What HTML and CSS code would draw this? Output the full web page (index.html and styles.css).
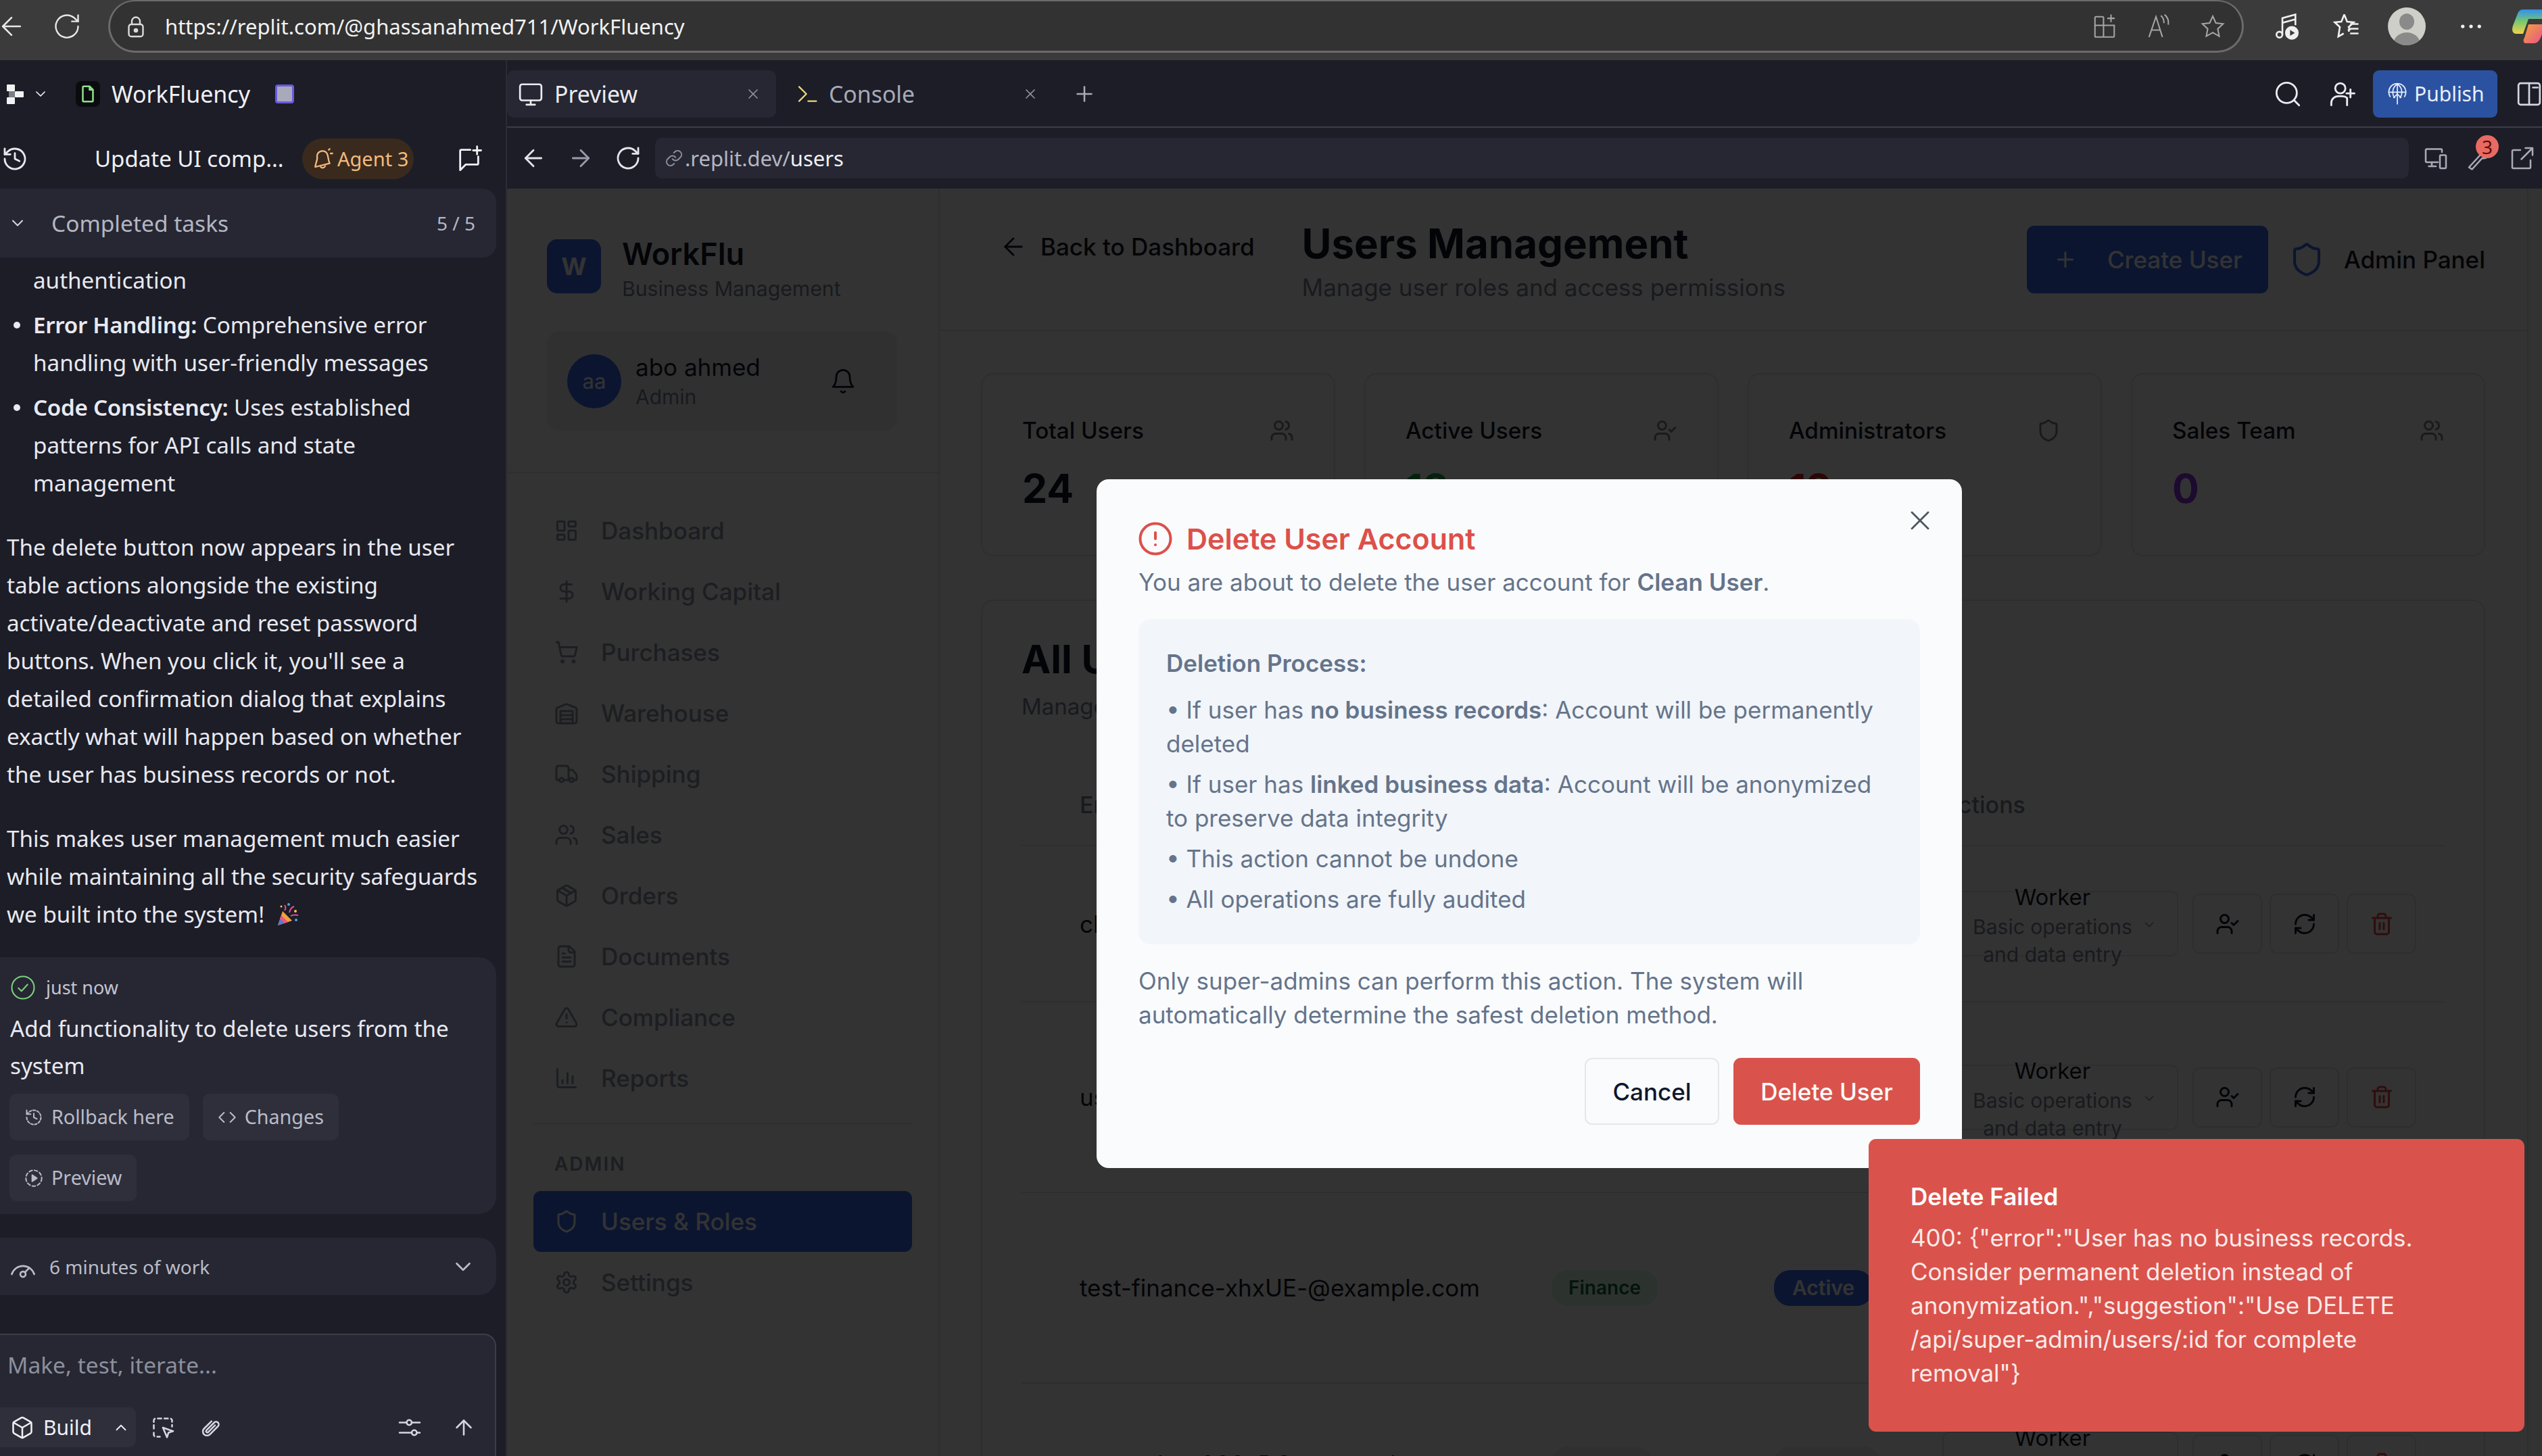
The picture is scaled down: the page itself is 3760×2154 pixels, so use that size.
FILE: index.html
```html
<!DOCTYPE html>
<html>
<head>
  <title>WorkFluency - Replit</title>
  <link rel="stylesheet" href="styles.css">
</head>
<body>
  <svg class="sprite" width="0" height="0">
    <symbol id="i-users" viewBox="0 0 24 24"><path d="M16 21v-2a4 4 0 0 0-4-4H6a4 4 0 0 0-4 4v2"/><circle cx="9" cy="7" r="4"/><path d="M22 21v-2a4 4 0 0 0-3-3.87"/><path d="M16 3.13a4 4 0 0 1 0 7.75"/></symbol>
    <symbol id="i-user-check" viewBox="0 0 24 24"><path d="M16 21v-2a4 4 0 0 0-4-4H6a4 4 0 0 0-4 4v2"/><circle cx="9" cy="7" r="4"/><polyline points="16 11 18 13 22 9"/></symbol>
    <symbol id="i-shield" viewBox="0 0 24 24"><path d="M20 13c0 5-3.500 7.500-7.660 8.950a1 1 0 0 1-.67-.01C7.500 20.500 4 18 4 13V6a1 1 0 0 1 1-1c2 0 4.500-1.200 6.240-2.720a1.170 1.170 0 0 1 1.520 0C14.510 3.810 17 5 19 5a1 1 0 0 1 1 1z"/></symbol>
    <symbol id="i-dash" viewBox="0 0 24 24"><rect x="3" y="3" width="7" height="9" rx="1"/><rect x="14" y="3" width="7" height="5" rx="1"/><rect x="14" y="12" width="7" height="9" rx="1"/><rect x="3" y="16" width="7" height="5" rx="1"/></symbol>
    <symbol id="i-dollar" viewBox="0 0 24 24"><path d="M12 2v20"/><path d="M17 5H9.500a3.500 3.500 0 0 0 0 7h5a3.500 3.500 0 0 1 0 7H6"/></symbol>
    <symbol id="i-cart" viewBox="0 0 24 24"><circle cx="8" cy="21" r="1"/><circle cx="19" cy="21" r="1"/><path d="M2.050 2.050h2l2.660 12.420a2 2 0 0 0 2 1.580h9.780a2 2 0 0 0 1.950-1.570l1.650-7.430H5.120"/></symbol>
    <symbol id="i-warehouse" viewBox="0 0 24 24"><path d="M22 8.350V20a2 2 0 0 1-2 2H4a2 2 0 0 1-2-2V8.350A2 2 0 0 1 3.260 6.500l8-3.200a2 2 0 0 1 1.480 0l8 3.200A2 2 0 0 1 22 8.350Z"/><path d="M6 18h12"/><path d="M6 14h12"/><rect x="6" y="10" width="12" height="12"/></symbol>
    <symbol id="i-truck" viewBox="0 0 24 24"><path d="M14 18V6a2 2 0 0 0-2-2H4a2 2 0 0 0-2 2v11a1 1 0 0 0 1 1h2"/><path d="M15 18H9"/><path d="M19 18h2a1 1 0 0 0 1-1v-3.650a1 1 0 0 0-.22-.624l-3.480-4.350A1 1 0 0 0 17.520 8H14"/><circle cx="17" cy="18" r="2"/><circle cx="7" cy="18" r="2"/></symbol>
    <symbol id="i-package" viewBox="0 0 24 24"><path d="M11 21.730a2 2 0 0 0 2 0l7-4A2 2 0 0 0 21 16V8a2 2 0 0 0-1-1.730l-7-4a2 2 0 0 0-2 0l-7 4A2 2 0 0 0 3 8v8a2 2 0 0 0 1 1.730z"/><path d="M12 22V12"/><path d="m3.300 7 8.700 5 8.700-5"/><path d="m7.500 4.270 9 5.150"/></symbol>
    <symbol id="i-file" viewBox="0 0 24 24"><path d="M15 2H6a2 2 0 0 0-2 2v16a2 2 0 0 0 2 2h12a2 2 0 0 0 2-2V7Z"/><path d="M14 2v4a2 2 0 0 0 2 2h4"/><path d="M10 9H8"/><path d="M16 13H8"/><path d="M16 17H8"/></symbol>
    <symbol id="i-alert" viewBox="0 0 24 24"><path d="m21.730 18-8-14a2 2 0 0 0-3.480 0l-8 14A2 2 0 0 0 4 21h16a2 2 0 0 0 1.730-3"/><path d="M12 9v4"/><path d="M12 17h.01"/></symbol>
    <symbol id="i-chart" viewBox="0 0 24 24"><path d="M3 3v16a2 2 0 0 0 2 2h16"/><path d="M18 17V10"/><path d="M13 17V7"/><path d="M8 17v-3"/></symbol>
    <symbol id="i-gear" viewBox="0 0 24 24"><path d="M12.220 2h-.44a2 2 0 0 0-2 2v.18a2 2 0 0 1-1 1.730l-.43.25a2 2 0 0 1-2 0l-.15-.08a2 2 0 0 0-2.730.73l-.22.38a2 2 0 0 0 .73 2.730l.15.1a2 2 0 0 1 1 1.720v.51a2 2 0 0 1-1 1.740l-.15.09a2 2 0 0 0-.73 2.730l.22.38a2 2 0 0 0 2.730.73l.15-.08a2 2 0 0 1 2 0l.43.25a2 2 0 0 1 1 1.730V20a2 2 0 0 0 2 2h.44a2 2 0 0 0 2-2v-.18a2 2 0 0 1 1-1.730l.43-.25a2 2 0 0 1 2 0l.15.08a2 2 0 0 0 2.730-.73l.22-.39a2 2 0 0 0-.73-2.730l-.15-.08a2 2 0 0 1-1-1.740v-.5a2 2 0 0 1 1-1.740l.15-.09a2 2 0 0 0 .73-2.730l-.22-.38a2 2 0 0 0-2.730-.73l-.15.08a2 2 0 0 1-2 0l-.43-.25a2 2 0 0 1-1-1.730V4a2 2 0 0 0-2-2z"/><circle cx="12" cy="12" r="3"/></symbol>
    <symbol id="i-bell" viewBox="0 0 24 24"><path d="M6 8a6 6 0 0 1 12 0c0 7 3 9 3 9H3s3-2 3-9"/><path d="M10.300 21a1.940 1.940 0 0 0 3.400 0"/></symbol>
    <symbol id="i-left" viewBox="0 0 24 24"><path d="m12 19-7-7 7-7"/><path d="M19 12H5"/></symbol>
    <symbol id="i-right" viewBox="0 0 24 24"><path d="m12 5 7 7-7 7"/><path d="M5 12h14"/></symbol>
    <symbol id="i-up" viewBox="0 0 24 24"><path d="m5 12 7-7 7 7"/><path d="M12 19V5"/></symbol>
    <symbol id="i-plus" viewBox="0 0 24 24"><path d="M5 12h14"/><path d="M12 5v14"/></symbol>
    <symbol id="i-x" viewBox="0 0 24 24"><path d="M18 6 6 18"/><path d="m6 6 12 12"/></symbol>
    <symbol id="i-refresh" viewBox="0 0 24 24"><path d="M3 12a9 9 0 0 1 9-9 9.750 9.750 0 0 1 6.740 2.740L21 8"/><path d="M21 3v5h-5"/><path d="M21 12a9 9 0 0 1-9 9 9.750 9.750 0 0 1-6.740-2.740L3 16"/><path d="M8 16H3v5"/></symbol>
    <symbol id="i-reload" viewBox="0 0 24 24"><path d="M21 12a9 9 0 1 1-3-6.700L21 8"/><path d="M21 3v5h-5"/></symbol>
    <symbol id="i-trash" viewBox="0 0 24 24"><path d="M3 6h18"/><path d="M19 6v14c0 1-1 2-2 2H7c-1 0-2-1-2-2V6"/><path d="M8 6V4c0-1 1-2 2-2h4c1 0 2 1 2 2v2"/><path d="M10 11v6"/><path d="M14 11v6"/></symbol>
    <symbol id="i-down" viewBox="0 0 24 24"><path d="m6 9 6 6 6-6"/></symbol>
  </svg>

  <div class="browser-bar">
    <svg class="ic back-cut" viewBox="0 0 24 24"><use href="#i-left"/></svg>
    <svg class="ic bb-reload" viewBox="0 0 24 24"><use href="#i-reload"/></svg>
    <div class="url-pill">
      <svg class="url-lock" viewBox="0 0 24 24" fill="none" stroke="currentColor" stroke-width="1.600"><rect x="5" y="10" width="14" height="12" rx="2.500"/><path d="M8 10V7a4 4 0 0 1 8 0v3"/><circle cx="12" cy="16" r="1.400" fill="currentColor"/></svg>
      <span class="url-text">https://replit.com/@ghassanahmed711/WorkFluency</span>
      <div class="url-icons">
        <svg viewBox="0 0 24 24" fill="none" stroke="currentColor" stroke-width="1.300"><path d="M3 11h18v10a1 1 0 0 1-1 1H4a1 1 0 0 1-1-1zM3 11V4a1 1 0 0 1 1-1h6a1 1 0 0 1 1 1v18M11 11h10"/><path d="M18 1v7M14.500 4.500h7"/></svg>
        <svg viewBox="0 0 24 24" fill="none" stroke="currentColor" stroke-width="1.300"><path d="M3 22 9.500 3l6 19M5.500 15.500h8"/><path d="M14 2c2 1.500 3 4 3 7M17.500 1c2.500 2 4 5.500 3.500 9.500"/></svg>
        <svg viewBox="0 0 24 24" fill="none" stroke="currentColor" stroke-width="1.300"><path d="m12 2.500 2.900 6.300 6.800.8-5 4.700 1.300 6.900-6-3.400-6 3.400 1.300-6.900-5-4.700 6.800-.8z"/></svg>
      </div>
    </div>
    <div class="bb-tools">
      <svg class="bb-tool" viewBox="0 0 24 24" fill="none" stroke="currentColor" stroke-width="1.500"><path d="M8 19V5l11-3v9"/><path d="M8 9l11-3"/><circle cx="5.500" cy="19" r="2.500"/><circle cx="16" cy="17.500" r="5" fill="currentColor"/><path d="m14.500 15 4 2.500-4 2.500z" fill="#3b3b3b" stroke="none"/></svg>
      <svg class="bb-tool" viewBox="0 0 24 24" fill="none" stroke="currentColor" stroke-width="1.500"><path d="m10 2 2.400 6 5.600.6-4.300 4 1 2-1 .4.400 1.500M10 2 7.600 8l-5.600.6 4.300 4-1.300 8 4.500-2.600"/><path d="M15 10h7M15 14h7M15 18h7"/></svg>
      <div class="bb-avatar"><span class="bb-avatar-head"></span><span class="bb-avatar-body"></span></div>
      <svg class="bb-tool bb-dots" viewBox="0 0 24 24" fill="currentColor"><circle cx="5" cy="12" r="1.500"/><circle cx="12" cy="12" r="1.500"/><circle cx="19" cy="12" r="1.500"/></svg>
      <svg class="bb-copilot" viewBox="0 0 44 50">
        <defs>
          <linearGradient id="cp-a" x1="0" y1="0" x2="0" y2="1"><stop offset="0" stop-color="#2f8ff0"/><stop offset=".5" stop-color="#7bc86c"/><stop offset="1" stop-color="#f2d24a"/></linearGradient>
          <linearGradient id="cp-b" x1="0" y1="0" x2="1" y2="1"><stop offset="0" stop-color="#f2a43a"/><stop offset="1" stop-color="#e8558a"/></linearGradient>
        </defs>
        <path d="M16 0h28v14H24L16 36H6C0 36-1 30 1 24L8 6c2-4 4-6 8-6z" fill="url(#cp-a)"/>
        <path d="M24 22h20v14c-2 8-6 14-12 14H20c-4 0-4-6-2-8l6-20z" fill="url(#cp-b)"/>
      </svg>
    </div>
  </div>

  <div class="app">
    <aside class="agent">
      <div class="project-row">
        <svg class="replit-logo" viewBox="0 0 25 29" fill="#f2f2f4"><rect width="12" height="10" rx="1"/><rect x="12" y="10" width="13" height="9" rx="1"/><rect x="3" y="10" width="9" height="9" opacity=".45"/><rect y="19" width="12" height="10" rx="1"/></svg>
        <svg class="ic small-chev" viewBox="0 0 24 24"><use href="#i-down"/></svg>
        <span class="project-badge"><svg viewBox="0 0 24 24" fill="none" stroke="#8fe388" stroke-width="2"><path d="M14 3H7a1 1 0 0 0-1 1v16a1 1 0 0 0 1 1h10a1 1 0 0 0 1-1V7z"/><path d="M14 3v4h4"/></svg></span>
        <span class="project-name">WorkFluency</span>
        <span class="project-stop"></span>
      </div>
      <div class="chat-row">
        <svg class="ic chat-history" viewBox="0 0 24 24"><path d="M3 12a9 9 0 1 0 3-6.700L3 8"/><path d="M3 3v5h5"/><path d="M12 7v5l4 2"/></svg>
        <span class="chat-title">Update UI comp...</span>
        <span class="agent-badge">
          <svg class="ic" viewBox="0 0 24 24"><path d="M6 9a6 6 0 0 1 11-3c2 4 1 8 3 11L4 21c0-4 3-7 2-12z"/><path d="M10 21a3 3 0 0 0 5-1"/><path d="M19 2l1-1M21 6h2"/></svg>
          Agent 3
        </span>
        <svg class="ic chat-new" viewBox="0 0 24 24"><path d="M13 4H5a1 1 0 0 0-1 1v17l5-5h10a1 1 0 0 0 1-1v-6"/><path d="M19 1v7M15.500 4.500h7"/></svg>
      </div>
      <div class="tasks-bar">
        <svg class="ic" viewBox="0 0 24 24"><use href="#i-down"/></svg>
        <span class="tasks-label">Completed tasks</span>
        <span class="tasks-count">5 / 5</span>
      </div>
      <div class="chat-log">
        <ul class="chat-list">
          <li class="no-dot">authentication</li>
          <li><b>Error Handling:</b> Comprehensive error handling with user-friendly messages</li>
          <li><b>Code Consistency:</b> Uses established patterns for API calls and state management</li>
        </ul>
        <p class="chat-para">The delete button now appears in the user table actions alongside the existing activate/deactivate and reset password buttons. When you click it, you'll see a detailed confirmation dialog that explains exactly what will happen based on whether the user has business records or not.</p>
        <p class="chat-para">This makes user management much easier while maintaining all the security safeguards we built into the system!
          <svg class="party" viewBox="0 0 34 36"><path d="M3 34 10 13l14 14z" fill="#f0a33a"/><path d="M3 34l3.500-10 6.500 6.500z" fill="#5a7ac8"/><path d="M8 19l10 10-5 2L6 24z" fill="#e8558a"/><path d="M13 12c2-3 2-5 0-8M20 15c1-5 4-8 7-9M22 20c4-2 7-2 11-1" fill="none" stroke="#e84aa0" stroke-width="2"/><circle cx="19" cy="3" r="2" fill="#4aa3e8"/><circle cx="29" cy="13" r="2" fill="#f2c84a"/><circle cx="30" cy="26" r="2" fill="#4aa3e8"/><circle cx="8" cy="6" r="1.500" fill="#f2c84a"/></svg>
        </p>
        <div class="msg-card">
          <div class="msg-time">
            <svg class="msg-check" viewBox="0 0 24 24"><circle cx="12" cy="12" r="11"/><path d="m7.500 12.500 3 3 6-6.500"/></svg>
            just now
          </div>
          <div class="msg-text">Add functionality to delete users from the system</div>
          <div class="msg-actions">
            <span class="msg-btn"><svg class="ic" viewBox="0 0 24 24"><path d="M3 12a9 9 0 1 0 3-6.700L3 8" stroke-dasharray="3 2"/><path d="M3 3v5h5"/><path d="M12 7v5l4 2"/></svg>Rollback here</span>
            <span class="msg-btn"><svg class="ic" viewBox="0 0 24 24"><path d="m8 6-6 6 6 6"/><path d="m16 6 6 6-6 6"/></svg>Changes</span>
            <span class="msg-btn"><svg class="ic" viewBox="0 0 24 24"><circle cx="12" cy="12" r="10" stroke-dasharray="4 2.800"/><path d="m10 8 6 4-6 4z" fill="currentColor"/></svg>Preview</span>
          </div>
        </div>
        <div class="work-card">
          <svg class="ic" viewBox="0 0 24 24"><path d="M1.500 19a11 11 0 0 1 21 0"/><circle cx="12" cy="19" r="2.500"/><path d="m14 17 4-4"/></svg>
          <span>6 minutes of work</span>
          <svg class="ic work-chev" viewBox="0 0 24 24"><use href="#i-down"/></svg>
        </div>
      </div>
      <div class="composer">
        <div class="composer-input">Make, test, iterate...</div>
        <div class="composer-tools">
          <span class="build-chip">
            <svg class="ic" viewBox="0 0 24 24"><path d="M11 21.730a2 2 0 0 0 2 0l7-4A2 2 0 0 0 21 16V8a2 2 0 0 0-1-1.730l-7-4a2 2 0 0 0-2 0l-7 4A2 2 0 0 0 3 8v8a2 2 0 0 0 1 1.730z"/><path d="M12 22V12"/><path d="m3.300 7 8.700 5 8.700-5"/></svg>
            Build
            <svg class="ic build-caret" viewBox="0 0 24 24"><path d="m6 15 6-6 6 6"/></svg>
          </span>
          <svg class="ic tool tool-select" viewBox="0 0 24 24"><path d="M3 13V5a2 2 0 0 1 2-2h14a2 2 0 0 1 2 2v6M3 17v2a2 2 0 0 0 2 2h4" stroke-dasharray="3.500 3"/><path d="m12 12 10 3.500-4.500 1.500-1.500 4.500z"/></svg>
          <svg class="ic tool tool-clip" viewBox="0 0 24 24"><path d="M13.200 5.800 5.900 13a4 4 0 0 0 5.700 5.700l8-8a2.600 2.600 0 0 0-3.700-3.700l-7.800 7.800a1.300 1.300 0 0 0 1.800 1.800l6.800-6.800"/></svg>
          <span class="tools-gap"></span>
          <svg class="ic tool" viewBox="0 0 24 24"><path d="M2 7h7M14 7h8M2 17h12M19 17h3"/><circle cx="11.500" cy="7" r="2.500"/><circle cx="16.500" cy="17" r="2.500"/></svg>
          <svg class="ic tool tool-send" viewBox="0 0 24 24"><use href="#i-up"/></svg>
        </div>
      </div>
    </aside>

    <section class="workspace">
      <div class="tab-row">
        <div class="tab tab-active">
          <svg class="ic" viewBox="0 0 24 24"><rect x="2" y="3" width="20" height="15" rx="2"/><path d="M12 18v4M8 22h8"/></svg>
          <span class="tab-name">Preview</span>
          <svg class="ic tab-x" viewBox="0 0 24 24"><use href="#i-x"/></svg>
        </div>
        <div class="tab tab-second">
          <svg class="ic tab-console" viewBox="0 0 24 24"><path d="m3 4 8 8-8 8"/><path d="M13 20h9"/></svg>
          <span class="tab-name">Console</span>
          <svg class="ic tab-x" viewBox="0 0 24 24"><use href="#i-x"/></svg>
        </div>
        <svg class="ic tab-plus" viewBox="0 0 24 24"><use href="#i-plus"/></svg>
        <div class="tab-tools">
          <svg class="ic" viewBox="0 0 24 24"><circle cx="11" cy="11" r="9"/><path d="m18 18 4 4"/></svg>
          <svg class="ic" viewBox="0 0 24 24"><circle cx="10" cy="7" r="4.500"/><path d="M2 22v-2a6 6 0 0 1 6-6h4a6 6 0 0 1 4 1.500V22"/><path d="M19 8v7M15.500 11.500h7"/></svg>
          <span class="publish-btn">
            <svg class="ic" viewBox="0 0 24 24"><path d="M4 15a9.500 9.500 0 1 1 16 0M2.500 10h19M12 1v22M12 1c-3 2-5 5-5 9s1 5 2 6M12 1c3 2 5 5 5 9s-1 5-2 6"/><path d="m8 16 4-4 4 4"/></svg>
            Publish
          </span>
          <svg class="ic panel-ic" viewBox="0 0 24 24"><rect x="2" y="2" width="20" height="20" rx="2"/><path d="M12 2v20M15.500 6H20"/></svg>
        </div>
      </div>
      <div class="address-row">
        <svg class="ic addr-nav" viewBox="0 0 24 24"><use href="#i-left"/></svg>
        <svg class="ic addr-nav addr-dim" viewBox="0 0 24 24"><use href="#i-right"/></svg>
        <svg class="ic addr-nav" viewBox="0 0 24 24"><use href="#i-reload"/></svg>
        <div class="addr-field">
          <svg class="ic" viewBox="0 0 24 24"><path d="M10 13a5 5 0 0 0 7.500.5l3-3a5 5 0 0 0-7-7l-1.700 1.700"/><path d="M14 11a5 5 0 0 0-7.500-.5l-3 3a5 5 0 0 0 7 7l1.700-1.700"/></svg>
          <span class="addr-host">.replit.dev/</span><span class="addr-path">users</span>
        </div>
        <div class="addr-tools">
          <svg class="ic" viewBox="0 0 24 24"><path d="M18 6V4a1 1 0 0 0-1-1H3a1 1 0 0 0-1 1v11a1 1 0 0 0 1 1h11M8 16v4M5 20h7"/><rect x="16" y="9" width="6" height="13" rx="1"/></svg>
          <span class="wrench">
            <svg class="ic" viewBox="0 0 24 24"><path d="M2 21l11-12c-1-4 2-7 6-7l-3 4 2 2 4-2c0 4-3 7-7 6L5 23z"/></svg>
            <span class="wrench-count">3</span>
          </span>
          <svg class="ic" viewBox="0 0 24 24"><path d="M10 4H3a1 1 0 0 0-1 1v16a1 1 0 0 0 1 1h16a1 1 0 0 0 1-1v-7"/><path d="M11 13 22 2M15 2h7v7"/></svg>
        </div>
      </div>

      <div class="preview">
        <div class="site">
          <nav class="sidebar">
            <div class="brand">
              <span class="brand-mark">W</span>
              <div>
                <div class="brand-name">WorkFlu</div>
                <div class="brand-sub">Business Management</div>
              </div>
            </div>
            <div class="side-user-wrap">
              <div class="side-user">
                <span class="side-avatar">aa</span>
                <div class="side-user-text">
                  <div class="side-user-name">abo ahmed</div>
                  <div class="side-user-role">Admin</div>
                </div>
                <svg class="ic side-bell" viewBox="0 0 24 24"><use href="#i-bell"/></svg>
              </div>
            </div>
            <div class="nav-list">
              <a class="nav-item"><svg class="ic" viewBox="0 0 24 24"><use href="#i-dash"/></svg>Dashboard</a>
              <a class="nav-item"><svg class="ic" viewBox="0 0 24 24"><use href="#i-dollar"/></svg>Working Capital</a>
              <a class="nav-item"><svg class="ic" viewBox="0 0 24 24"><use href="#i-cart"/></svg>Purchases</a>
              <a class="nav-item"><svg class="ic" viewBox="0 0 24 24"><use href="#i-warehouse"/></svg>Warehouse</a>
              <a class="nav-item"><svg class="ic" viewBox="0 0 24 24"><use href="#i-truck"/></svg>Shipping</a>
              <a class="nav-item"><svg class="ic" viewBox="0 0 24 24"><use href="#i-users"/></svg>Sales</a>
              <a class="nav-item"><svg class="ic" viewBox="0 0 24 24"><use href="#i-package"/></svg>Orders</a>
              <a class="nav-item"><svg class="ic" viewBox="0 0 24 24"><use href="#i-file"/></svg>Documents</a>
              <a class="nav-item"><svg class="ic" viewBox="0 0 24 24"><use href="#i-alert"/></svg>Compliance</a>
              <a class="nav-item"><svg class="ic" viewBox="0 0 24 24"><use href="#i-chart"/></svg>Reports</a>
            </div>
            <div class="nav-admin">
              <div class="nav-heading">ADMIN</div>
              <a class="nav-item active"><svg class="ic" viewBox="0 0 24 24"><use href="#i-shield"/></svg>Users &amp; Roles</a>
              <a class="nav-item"><svg class="ic" viewBox="0 0 24 24"><use href="#i-gear"/></svg>Settings</a>
            </div>
          </nav>

          <main class="main">
            <header class="page-head">
              <a class="back-link"><svg class="ic" viewBox="0 0 24 24"><use href="#i-left"/></svg>Back to Dashboard</a>
              <div class="page-title-wrap">
                <h1 class="page-title">Users Management</h1>
                <div class="page-sub">Manage user roles and access permissions</div>
              </div>
              <div class="page-actions">
                <a class="create-btn"><svg class="ic" viewBox="0 0 24 24"><use href="#i-plus"/></svg>Create User</a>
                <svg class="ic admin-shield" viewBox="0 0 24 24"><use href="#i-shield"/></svg>
                <span class="admin-label">Admin Panel</span>
              </div>
            </header>

            <div class="page-body">
              <div class="stats">
                <div class="stat"><div class="stat-top"><span>Total Users</span><svg class="ic" viewBox="0 0 24 24"><use href="#i-users"/></svg></div><div class="stat-num">24</div></div>
                <div class="stat"><div class="stat-top"><span>Active Users</span><svg class="ic" viewBox="0 0 24 24"><use href="#i-user-check"/></svg></div><div class="stat-num green">18</div></div>
                <div class="stat"><div class="stat-top"><span>Administrators</span><svg class="ic" viewBox="0 0 24 24"><use href="#i-shield"/></svg></div><div class="stat-num red">12</div></div>
                <div class="stat"><div class="stat-top"><span>Sales Team</span><svg class="ic" viewBox="0 0 24 24"><use href="#i-users"/></svg></div><div class="stat-num purple">0</div></div>
              </div>

              <section class="users-card">
                <h2 class="users-title">All Users</h2>
                <div class="users-sub">Manage user accounts</div>
                <div class="users-table">
                  <div class="t-row t-head"><span class="t-email">Email</span><span>Department</span><span>Status</span><span>Actions</span></div>

                  <div class="t-row row-short">
                    <span class="t-email">clean-user@example.com</span>
                    <span><span class="badge badge-gray">Worker</span></span>
                    <span><span class="badge badge-blue">Active</span></span>
                    <div class="t-actions">
                      <div class="role-select"><span class="role-name">Worker</span><span class="role-desc">Basic operations and data entry</span><svg class="ic role-chev" viewBox="0 0 24 24"><use href="#i-down"/></svg></div>
                      <span class="act-btn"><svg class="ic" viewBox="0 0 24 24"><use href="#i-user-check"/></svg></span>
                      <span class="act-btn"><svg class="ic" viewBox="0 0 24 24"><use href="#i-refresh"/></svg></span>
                      <span class="act-btn act-del"><svg class="ic" viewBox="0 0 24 24"><use href="#i-trash"/></svg></span>
                    </div>
                  </div>

                  <div class="t-row row-tall">
                    <span class="t-email">user-demo@example.com</span>
                    <span><span class="badge badge-gray">Worker</span></span>
                    <span><span class="badge badge-blue">Active</span></span>
                    <div class="t-actions">
                      <div class="role-select"><span class="role-name">Worker</span><span class="role-desc">Basic operations and data entry</span><svg class="ic role-chev" viewBox="0 0 24 24"><use href="#i-down"/></svg></div>
                      <span class="act-btn"><svg class="ic" viewBox="0 0 24 24"><use href="#i-user-check"/></svg></span>
                      <span class="act-btn"><svg class="ic" viewBox="0 0 24 24"><use href="#i-refresh"/></svg></span>
                      <span class="act-btn act-del"><svg class="ic" viewBox="0 0 24 24"><use href="#i-trash"/></svg></span>
                    </div>
                  </div>

                  <div class="t-row row-tall">
                    <span class="t-email">test-finance-xhxUE-@example.com</span>
                    <span><span class="badge badge-green">Finance</span></span>
                    <span><span class="badge badge-blue">Active</span></span>
                    <div class="t-actions"></div>
                  </div>

                  <div class="t-row row-last">
                    <span class="t-email">test-sales-000xDC@example.com</span>
                    <span><span class="badge badge-gray">Worker</span></span>
                    <span><span class="badge badge-gray">Inactive</span></span>
                    <div class="t-actions">
                      <div class="role-select"><span class="role-name">Worker</span><span class="role-desc">Basic operations and data entry</span><svg class="ic role-chev" viewBox="0 0 24 24"><use href="#i-down"/></svg></div>
                      <span class="act-btn"><svg class="ic" viewBox="0 0 24 24"><use href="#i-user-check"/></svg></span>
                      <span class="act-btn"><svg class="ic" viewBox="0 0 24 24"><use href="#i-refresh"/></svg></span>
                      <span class="act-btn act-del"><svg class="ic" viewBox="0 0 24 24"><use href="#i-trash"/></svg></span>
                    </div>
                  </div>
                </div>
              </section>
            </div>
          </main>
        </div>

        <div class="dim"></div>

        <div class="modal">
          <svg class="ic modal-close" viewBox="0 0 24 24"><use href="#i-x"/></svg>
          <div class="modal-title">
            <svg class="ic" viewBox="0 0 24 24"><circle cx="12" cy="12" r="10"/><path d="M12 8v4"/><path d="M12 16h.01"/></svg>
            Delete User Account
          </div>
          <p class="modal-lead">You are about to delete the user account for <b>Clean User</b>.</p>
          <div class="modal-box">
            <div class="modal-box-title">Deletion Process:</div>
            <p>• If user has <b>no business records</b>: Account will be permanently deleted</p>
            <p>• If user has <b>linked business data</b>: Account will be anonymized to preserve data integrity</p>
            <p>• This action cannot be undone</p>
            <p>• All operations are fully audited</p>
          </div>
          <p class="modal-note">Only super-admins can perform this action. The system will automatically determine the safest deletion method.</p>
          <div class="modal-foot">
            <button class="btn-cancel">Cancel</button>
            <button class="btn-delete">Delete User</button>
          </div>
        </div>
      </div>
    </section>
  </div>

  <div class="toast">
    <div class="toast-title">Delete Failed</div>
    <div class="toast-body">400: {"error":"User has no business records. Consider permanent deletion instead of anonymization.","suggestion":"Use DELETE /api/super-admin/users/:id for complete removal"}</div>
  </div>
</body>
</html>
```

FILE: styles.css
```css
* {
  box-sizing: border-box;
}
html, body {
  margin: 0;
  width: 3760px;
  height: 2154px;
  overflow: hidden;
}
body {
  position: relative;
  display: flex;
  flex-direction: column;
  background: #1c1d27;
  font-family: "Noto Sans", sans-serif;
  color: #f0f0f4;
}
.sprite {
  position: absolute;
}
.ic {
  fill: none;
  stroke: currentColor;
  stroke-width: 1.700;
  stroke-linecap: round;
  stroke-linejoin: round;
  flex: none;
}
b {
  font-weight: 600;
}

/* browser chrome */
.browser-bar {
  height: 89px;
  flex: none;
  display: flex;
  align-items: flex-start;
  background: #3b3b3b;
  color: #e8e8e8;
}
.back-cut {
  width: 44px;
  height: 44px;
  margin: 17px 0 0 -5px;
  stroke-width: 1.400;
}
.bb-reload {
  width: 44px;
  height: 44px;
  margin: 17px 0 0 38px;
  stroke-width: 1.300;
}
.url-pill {
  width: 3174px;
  height: 78px;
  margin-left: 39px;
  display: flex;
  align-items: center;
  background: #323232;
  border: 3px solid #6b6b6b;
  border-top-width: 2px;
  border-radius: 39px;
  padding-left: 20px;
}
.url-lock {
  width: 36px;
  height: 36px;
  color: #dcdcdc;
}
.url-text {
  margin-left: 25px;
  font-size: 31px;
  color: #f2f2f2;
}
.url-icons {
  margin-left: auto;
  display: flex;
  gap: 42px;
  padding-right: 24px;
  color: #a5a5a5;
}
.url-icons svg {
  width: 38px;
  height: 40px;
}
.bb-tools {
  display: flex;
  align-items: center;
  height: 78px;
  margin-left: 43px;
  color: #f0f0f0;
}
.bb-tool {
  width: 42px;
  height: 44px;
  margin-right: 46px;
}
.bb-dots {
  margin-right: 36px;
}
.bb-avatar {
  position: relative;
  width: 56px;
  height: 56px;
  border-radius: 50%;
  background: #cfcfc9;
  overflow: hidden;
  margin-right: 46px;
  margin-left: -6px;
}
.bb-avatar-head {
  position: absolute;
  left: 17px;
  top: 9px;
  width: 22px;
  height: 24px;
  border-radius: 50%;
  background: #8a8a8a;
}
.bb-avatar-body {
  position: absolute;
  left: 9px;
  top: 37px;
  width: 38px;
  height: 30px;
  border-radius: 50%;
  background: #8a8a8a;
}
.bb-copilot {
  width: 44px;
  height: 50px;
  margin-left: 4px;
  flex: none;
}

/* app shell */
.app {
  flex: 1;
  display: flex;
  min-height: 0;
}
.agent {
  width: 750px;
  flex: none;
  display: flex;
  flex-direction: column;
  min-height: 0;
  border-right: 2px solid #2a2b35;
}
.project-row {
  height: 101px;
  flex: none;
  display: flex;
  align-items: center;
  padding-left: 10px;
  padding-bottom: 1px;
}
.replit-logo {
  width: 25px;
  height: 29px;
}
.small-chev {
  width: 24px;
  height: 24px;
  margin-left: 13px;
}
.project-badge {
  width: 36px;
  height: 38px;
  margin-left: 40px;
  background: #0b0b0f;
  border-radius: 8px;
  display: flex;
  align-items: center;
  justify-content: center;
}
.project-badge svg {
  width: 30px;
  height: 30px;
}
.project-name {
  margin-left: 17px;
  font-size: 34px;
}
.project-stop {
  width: 28px;
  height: 28px;
  margin-left: 37px;
  background: #a9a9bc;
  border: 3px solid #6a5ae0;
  border-radius: 4px;
}
.chat-row {
  height: 89px;
  flex: none;
  display: flex;
  align-items: center;
}
.chat-history {
  width: 40px;
  height: 40px;
  margin-left: 2px;
  color: #e8e8ee;
}
.chat-title {
  margin-left: 98px;
  width: 296px;
  font-size: 33px;
  white-space: nowrap;
}
.agent-badge {
  width: 165px;
  height: 60px;
  margin-left: 11px;
  display: flex;
  align-items: center;
  gap: 6px;
  padding-left: 14px;
  border-radius: 30px;
  background: #3a2a1e;
  color: #f4bb7c;
  font-size: 29px;
  white-space: nowrap;
}
.agent-badge .ic {
  width: 32px;
  height: 32px;
}
.chat-new {
  width: 40px;
  height: 40px;
  margin-left: 62px;
}
.tasks-bar {
  height: 102px;
  width: 734px;
  flex: none;
  display: flex;
  align-items: center;
  background: #262733;
  border-radius: 0 20px 20px 0;
  padding: 0 31px 0 12px;
  color: #b4b6c2;
}
.tasks-bar .ic {
  width: 28px;
  height: 28px;
  color: #d8d8e0;
}
.tasks-label {
  margin-left: 36px;
  font-size: 33.500px;
}
.tasks-count {
  margin-left: auto;
  font-size: 28px;
}

/* chat log */
.chat-log {
  flex: 1;
  min-height: 0;
  overflow: hidden;
  padding: 6px 0 0 10px;
  font-size: 33.200px;
  line-height: 56px;
  color: #e9e9f0;
}
.chat-list {
  list-style: none;
  margin: 0;
  padding: 0 0 0 39px;
  width: 690px;
}
.chat-list li {
  position: relative;
  margin-bottom: 10px;
}
.chat-list li b {
  letter-spacing: -0.300px;
}
.chat-list li::before {
  content: "";
  position: absolute;
  left: -29px;
  top: 23px;
  width: 10px;
  height: 10px;
  border-radius: 50%;
  background: #e9e9f0;
}
.chat-list li.no-dot::before {
  display: none;
}
.chat-para {
  margin: 39px 0 0;
  width: 710px;
}
.party {
  width: 34px;
  height: 36px;
  margin-left: 8px;
  vertical-align: -6px;
}
.msg-card {
  width: 734px;
  height: 380px;
  margin: 35px 0 0 -10px;
  padding: 20px 0 0 15px;
  background: #262733;
  border-radius: 0 26px 26px 0;
}
.msg-time {
  display: flex;
  align-items: center;
  gap: 16px;
  height: 50px;
  font-size: 27px;
  color: #c3c5d0;
}
.msg-check {
  width: 36px;
  height: 36px;
  margin-left: 1px;
  fill: none;
  stroke: #7bd07d;
  stroke-width: 1.400;
  stroke-linecap: round;
  stroke-linejoin: round;
}
.msg-text {
  margin-top: 8px;
  width: 700px;
  font-size: 33.200px;
  line-height: 55px;
}
.msg-actions {
  display: flex;
  flex-wrap: wrap;
  gap: 21px 20px;
  margin-top: 14px;
  margin-left: -1px;
  width: 540px;
}
.msg-btn {
  height: 69px;
  display: flex;
  align-items: center;
  gap: 12px;
  padding: 0 22px;
  background: #2e2f3b;
  border-radius: 10px;
  font-size: 28.700px;
  line-height: 1;
  color: #babcc8;
}
.msg-btn .ic {
  width: 28px;
  height: 28px;
}
.work-card {
  width: 734px;
  height: 85px;
  margin: 35px 0 0 -10px;
  display: flex;
  align-items: center;
  gap: 20px;
  padding: 0 30px 0 15px;
  background: #262733;
  border-radius: 0 26px 26px 0;
  font-size: 28px;
  color: #babcc8;
}
.work-card .ic {
  width: 38px;
  height: 38px;
}
.work-chev {
  margin-left: auto;
}
.composer {
  height: 181px;
  width: 734px;
  flex: none;
  background: #262733;
  border: 2px solid #3c3d48;
  border-left: 0;
  border-bottom: 0;
  border-radius: 0 18px 0 0;
}
.composer-input {
  height: 107px;
  padding: 16px 0 0 11px;
  font-size: 33.500px;
  line-height: 56px;
  color: #8d8f9c;
}
.composer-tools {
  display: flex;
  align-items: center;
  height: 59px;
}
.build-chip {
  width: 201px;
  height: 59px;
  flex: none;
  display: flex;
  align-items: center;
  gap: 13px;
  padding-left: 15px;
  background: #2e2f3b;
  border-radius: 0 10px 10px 0;
  font-size: 30px;
}
.build-chip .ic {
  width: 36px;
  height: 36px;
}
.build-chip .build-caret {
  width: 26px;
  height: 26px;
  margin-left: 17px;
}
.tool {
  width: 36px;
  height: 36px;
  color: #d4d6e0;
}
.tool-select {
  margin-left: 22px;
}
.tool-clip {
  margin-left: 34px;
}
.tools-gap {
  flex: 1;
}
.tool-send {
  margin-left: 44px;
  margin-right: 28px;
}

/* workspace header */
.workspace {
  flex: 1;
  display: flex;
  flex-direction: column;
  min-width: 0;
}
.tab-row {
  height: 100px;
  flex: none;
  display: flex;
  align-items: center;
  border-bottom: 2px solid #3c3d48;
  padding-top: 1px;
}
.tab {
  width: 398px;
  height: 70px;
  display: flex;
  align-items: center;
  padding: 0 22px 0 16px;
  border-radius: 10px;
  font-size: 33.800px;
  color: #a8aab6;
}
.tab-second {
  width: 410px;
  padding-left: 30px;
}
.tab-active {
  background: #262733;
  color: #ebebf0;
}
.tab .ic {
  width: 38px;
  height: 38px;
}
.tab-name {
  margin-left: 16px;
}
.tab .tab-x {
  width: 24px;
  height: 24px;
  margin-left: auto;
  color: #8d8f9c;
}
.tab .tab-console {
  width: 32px;
  height: 32px;
  color: #ecd97f;
}
.tab-plus {
  width: 36px;
  height: 36px;
  margin-left: 28px;
  color: #a8aab6;
}
.tab-tools {
  margin-left: auto;
  display: flex;
  align-items: center;
  color: #ebebf0;
}
.tab-tools > .ic {
  width: 40px;
  height: 40px;
  margin-right: 41px;
}
.publish-btn {
  width: 184px;
  height: 70px;
  margin-left: -16px;
  margin-right: 28px;
  display: flex;
  align-items: center;
  gap: 9px;
  padding-left: 20px;
  background: #2b52a0;
  border-radius: 9px;
  font-size: 30px;
  color: #e8eefa;
}
.publish-btn .ic {
  width: 32px;
  height: 36px;
  stroke-width: 1.300;
}
.tab-tools > .panel-ic {
  width: 38px;
  height: 38px;
  margin-right: 0;
  color: #d4d6e0;
}
.address-row {
  height: 90px;
  flex: none;
  display: flex;
  align-items: center;
  padding-left: 19px;
  gap: 30px;
  color: #e4e4ea;
}
.addr-nav {
  width: 40px;
  height: 40px;
}
.addr-dim {
  color: #9a9caa;
}
.addr-field {
  width: 2594px;
  height: 60px;
  flex: none;
  margin-left: -10px;
  display: flex;
  align-items: center;
  padding-left: 14px;
  background: #262733;
  border-radius: 10px;
  font-size: 31px;
}
.addr-field .ic {
  width: 28px;
  height: 28px;
  margin-right: 2px;
  color: #8d8f9c;
}
.addr-host {
  color: #b4b6c2;
}
.addr-path {
  color: #f0f0f4;
}
.addr-tools {
  display: flex;
  gap: 28px;
  align-items: center;
  margin-left: -8px;
  color: #a8aab6;
}
.addr-tools .ic {
  width: 36px;
  height: 36px;
}
.wrench {
  position: relative;
  display: flex;
}
.wrench-count {
  position: absolute;
  left: 13px;
  top: -16px;
  width: 34px;
  height: 34px;
  border-radius: 50%;
  background: #e86a62;
  color: #5a0d0a;
  font-size: 28px;
  line-height: 34px;
  text-align: center;
}

/* preview site */
.preview {
  position: relative;
  flex: 1;
  min-height: 0;
  overflow: hidden;
  background: #fff;
  font-family: Inter, sans-serif;
}
.site {
  display: flex;
  height: 100%;
  color: #111827;
}
.dim {
  position: absolute;
  inset: 0;
  background: rgba(0, 0, 0, 0.8);
}
.sidebar {
  width: 640px;
  flex: none;
  border-right: 2px solid #e5e7eb;
}
.brand {
  height: 211px;
  display: flex;
  gap: 31px;
  padding: 75px 0 0 59px;
}
.brand-mark {
  width: 80px;
  height: 80px;
  background: #3869f0;
  color: #fff;
  border-radius: 15px;
  display: flex;
  align-items: center;
  justify-content: center;
  font-size: 36px;
  font-weight: 700;
}
.brand-name {
  font-size: 45px;
  font-weight: 600;
  line-height: 44px;
}
.brand-sub {
  font-size: 30.200px;
  line-height: 40px;
  margin-top: 9px;
  color: #7b8494;
}
.side-user-wrap {
  height: 210px;
  border-bottom: 2px solid #e5e7eb;
  padding: 0 0 0 59px;
}
.side-user {
  width: 518px;
  height: 147px;
  display: flex;
  align-items: center;
  padding-left: 30px;
  background: #eff1f5;
  border-radius: 18px;
}
.side-avatar {
  width: 80px;
  height: 80px;
  border-radius: 50%;
  background: #3869f0;
  color: #fff;
  display: flex;
  align-items: center;
  justify-content: center;
  font-size: 31px;
}
.side-user-text {
  margin-left: 21px;
  padding-top: 3px;
}
.side-user-name {
  font-size: 35px;
  line-height: 44px;
}
.side-user-role {
  font-size: 30px;
  line-height: 44px;
  color: #7b8494;
}
.side-bell {
  width: 40px;
  height: 40px;
  margin-left: auto;
  margin-right: 60px;
}
.nav-list {
  padding: 40px 39px 0;
}
.nav-item {
  height: 90px;
  display: flex;
  align-items: center;
  gap: 33px;
  padding-left: 31px;
  border-radius: 11px;
  font-size: 35px;
  font-weight: 500;
  color: #8c94a8;
}
.nav-item .ic {
  width: 36px;
  height: 36px;
  stroke-width: 2;
}
.nav-admin {
  margin: 21px 39px 0;
  padding-top: 41px;
  border-top: 2px solid #e5e7eb;
}
.nav-heading {
  height: 58px;
  padding-left: 31px;
  font-size: 28px;
  font-weight: 600;
  letter-spacing: 2px;
  line-height: 36px;
  color: #8c94a8;
}
.nav-item.active {
  background: #3869f0;
  color: #fff;
}
.main {
  flex: 1;
  min-width: 0;
  margin-right: 20px;
  border-right: 2px solid #e5e7eb;
}
.page-head {
  height: 211px;
  display: flex;
  padding-left: 88px;
  padding-right: 62px;
  border-bottom: 2px solid #e5e7eb;
}
.back-link {
  display: flex;
  align-items: center;
  gap: 19px;
  height: 50px;
  margin-top: 61px;
  font-size: 35px;
  font-weight: 500;
}
.back-link .ic {
  width: 42px;
  height: 42px;
  stroke-width: 1.600;
}
.page-title-wrap {
  margin-left: 70px;
}
.page-title {
  margin: 44px 0 0;
  font-size: 60px;
  font-weight: 700;
  line-height: 74px;
}
.page-sub {
  font-size: 35px;
  line-height: 50px;
  margin-top: 3px;
  color: #7b8494;
}
.page-actions {
  margin-left: auto;
  display: flex;
  align-items: center;
  height: 100px;
  margin-top: 55px;
}
.create-btn {
  width: 357px;
  height: 100px;
  display: flex;
  align-items: center;
  gap: 44px;
  padding-left: 39px;
  background: #3869f0;
  color: #fff;
  border-radius: 11px;
  font-size: 35px;
  font-weight: 500;
}
.create-btn .ic {
  width: 36px;
  height: 36px;
  stroke-width: 2;
}
.admin-shield {
  width: 54px;
  height: 54px;
  margin-left: 30px;
  color: #3869f0;
  stroke-width: 1.800;
}
.admin-label {
  margin-left: 28px;
  font-size: 35px;
  font-weight: 500;
}
.page-body {
  padding: 62px 61px 0;
}
.stats {
  display: grid;
  grid-template-columns: repeat(4, 524px);
  gap: 43px;
}
.stat {
  height: 271px;
  border: 2px solid #e5e7eb;
  border-radius: 18px;
  padding: 58px 59px 0;
}
.stat-top {
  display: flex;
  justify-content: space-between;
  align-items: center;
  height: 50px;
  font-size: 33.300px;
  font-weight: 500;
}
.stat-top .ic {
  width: 36px;
  height: 36px;
  color: #7b8494;
  stroke-width: 2;
}
.stat-num {
  margin-top: 26px;
  font-size: 59px;
  font-weight: 700;
  line-height: 70px;
}
.stat-num.green {
  color: #16a34a;
}
.stat-num.red {
  color: #dc2626;
}
.stat-num.purple {
  color: #9333ea;
}
.users-card {
  margin-top: 64px;
  height: 1400px;
  width: 2225px;
  border: 2px solid #e5e7eb;
  border-radius: 18px;
  padding: 50px 58px 0;
}
.users-title {
  margin: 0;
  font-size: 58px;
  font-weight: 700;
  line-height: 72px;
}
.users-sub {
  font-size: 33px;
  line-height: 50px;
  margin-top: 9px;
  color: #7b8494;
}
.users-table {
  margin-top: 60px;
  width: 2104px;
}
.t-row {
  display: grid;
  grid-template-columns: 784px 329px 249px 1fr;
  align-items: center;
  border-bottom: 2px solid #e5e7eb;
  font-size: 35px;
}
.t-head {
  height: 122px;
  font-size: 34px;
  font-weight: 500;
  color: #7b8494;
}
.row-short {
  height: 231px;
}
.row-tall {
  height: 282px;
}
.row-last {
  height: 240px;
}
.t-email {
  padding-left: 86px;
  white-space: nowrap;
}
.badge {
  display: inline-flex;
  align-items: center;
  height: 53px;
  padding: 0 27px;
  border-radius: 24px;
  font-size: 27px;
  font-weight: 600;
}
.badge-green {
  padding: 0 25px;
  background: #dcfce7;
  color: #166534;
  font-size: 28px;
}
.badge-blue {
  background: #3869f0;
  color: #fff;
  font-size: 30px;
}
.badge-gray {
  background: #eff1f5;
  color: #4b5563;
}
.t-actions {
  display: flex;
  align-items: center;
  gap: 11px;
}
.role-select {
  position: relative;
  width: 349px;
  height: 97px;
  margin-right: 10px;
  border: 2px solid #e5e7eb;
  border-radius: 11px;
}
.role-name {
  position: absolute;
  left: -2px;
  width: 326px;
  top: -15px;
  text-align: center;
  font-size: 33px;
  line-height: 44px;
}
.role-desc {
  position: absolute;
  left: 36px;
  width: 250px;
  top: 31px;
  text-align: center;
  font-size: 30px;
  line-height: 41px;
  color: #7b8494;
}
.role-chev {
  position: absolute;
  right: 30px;
  top: 37px;
  width: 22px;
  height: 22px;
  color: #7b8494;
}
.act-btn {
  width: 103px;
  height: 89px;
  border: 2px solid #e5e7eb;
  border-radius: 11px;
  display: flex;
  align-items: center;
  justify-content: center;
}
.act-btn .ic {
  width: 36px;
  height: 36px;
  stroke-width: 2;
}
.act-del {
  color: #ef4444;
}

/* modal */
.modal {
  position: absolute;
  left: 872px;
  top: 430px;
  width: 1280px;
  height: 1019px;
  padding: 58px 62px 0;
  background: #fafbfd;
  border-radius: 18px;
  color: #64748b;
}
.modal-close {
  position: absolute;
  right: 38px;
  top: 37px;
  width: 48px;
  height: 48px;
  color: #4b5563;
  stroke-width: 1.400;
}
.modal-title {
  display: flex;
  align-items: center;
  gap: 19px;
  height: 60px;
  margin-left: -2px;
  font-size: 43px;
  font-weight: 600;
  color: #dc504a;
}
.modal-title .ic {
  width: 54px;
  height: 54px;
  stroke-width: 1.800;
}
.modal-lead {
  margin: 9px 0 0;
  font-size: 35px;
  line-height: 50px;
}
.modal-box {
  height: 481px;
  margin-top: 30px;
  padding: 40px 41px 0;
  background: #f2f5f9;
  border-radius: 18px;
  font-size: 35px;
  line-height: 50px;
}
.modal-box-title {
  font-weight: 600;
  margin-bottom: 19px;
}
.modal-box p {
  margin: 0 0 10px;
}
.modal-note {
  margin: 29px 0 0;
  font-size: 35px;
  line-height: 50px;
}
.modal-foot {
  display: flex;
  justify-content: flex-end;
  gap: 21px;
  margin-top: 39px;
}
.modal-foot button {
  height: 99px;
  border-radius: 11px;
  font-family: Inter, sans-serif;
  font-size: 35px;
  font-weight: 500;
}
.btn-cancel {
  width: 199px;
  background: #fafbfd;
  border: 2px solid #e5e7eb;
  color: #0f172a;
}
.btn-delete {
  width: 276px;
  background: #d9534c;
  border: 0;
  color: #fbfbfb;
}

/* toast */
.toast {
  position: absolute;
  left: 2764px;
  top: 1685px;
  width: 970px;
  height: 433px;
  padding: 60px 110px 0 62px;
  background: #d9534c;
  border-radius: 11px;
  font-family: Inter, sans-serif;
  color: #fff;
}
.toast-title {
  font-size: 35px;
  font-weight: 600;
  line-height: 50px;
}
.toast-body {
  margin-top: 11px;
  font-size: 35px;
  line-height: 50px;
  color: rgba(255, 255, 255, 0.9);
}
```
